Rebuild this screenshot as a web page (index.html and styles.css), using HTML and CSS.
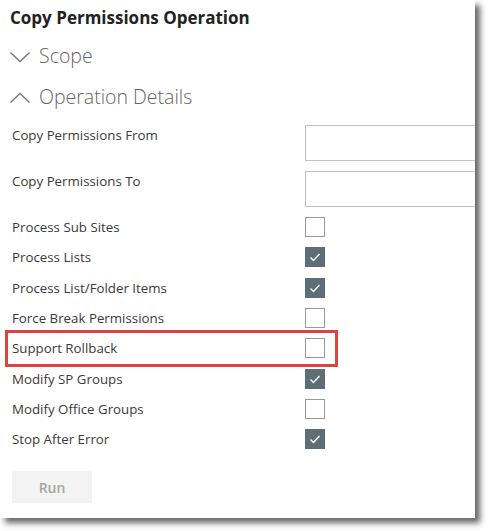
FILE: index.html
```html
<!DOCTYPE html>
<html>
<head>
<meta charset="utf-8">
<link rel="stylesheet" href="styles.css">
</head>
<body>
<div class="panel">
  <div class="title">Copy Permissions Operation</div>
  <div class="section">
    <svg class="chev" width="22" height="12" viewBox="0 0 22 12"><polyline points="1.5,1.5 11,10.5 20.5,1.5" fill="none" stroke="#777" stroke-width="1.3"/></svg>
    <span>Scope</span>
  </div>
  <div class="section open">
    <svg class="chev" width="22" height="12" viewBox="0 0 22 12"><polyline points="1.5,10.5 11,1.5 20.5,10.5" fill="none" stroke="#777" stroke-width="1.3"/></svg>
    <span>Operation Details</span>
  </div>
  <div class="form">
    <div class="row text-row first">
      <label>Copy Permissions From</label>
      <div class="input"></div>
    </div>
    <div class="row text-row">
      <label>Copy Permissions To</label>
      <div class="input"></div>
    </div>
    <div class="row check-row"><label>Process Sub Sites</label><span class="cb"></span></div>
    <div class="row check-row"><label>Process Lists</label><span class="cb checked"><svg width="20" height="20" viewBox="0 0 20 20"><polyline points="5.5,10.5 8.5,13.5 14.5,7" fill="none" stroke="#fff" stroke-width="1.3"/></svg></span></div>
    <div class="row check-row"><label>Process List/Folder Items</label><span class="cb checked"><svg width="20" height="20" viewBox="0 0 20 20"><polyline points="5.5,10.5 8.5,13.5 14.5,7" fill="none" stroke="#fff" stroke-width="1.3"/></svg></span></div>
    <div class="row check-row"><label>Force Break Permissions</label><span class="cb"></span></div>
    <div class="row check-row highlight"><label>Support Rollback</label><span class="cb"></span></div>
    <div class="row check-row"><label>Modify SP Groups</label><span class="cb checked"><svg width="20" height="20" viewBox="0 0 20 20"><polyline points="5.5,10.5 8.5,13.5 14.5,7" fill="none" stroke="#fff" stroke-width="1.3"/></svg></span></div>
    <div class="row check-row"><label>Modify Office Groups</label><span class="cb"></span></div>
    <div class="row check-row"><label>Stop After Error</label><span class="cb checked"><svg width="20" height="20" viewBox="0 0 20 20"><polyline points="5.5,10.5 8.5,13.5 14.5,7" fill="none" stroke="#fff" stroke-width="1.3"/></svg></span></div>
  </div>
  <button class="run">Run</button>
</div>
</body>
</html>
```
FILE: styles.css
```css
html, body {
  margin: 0;
  padding: 0;
  background: #fff;
}
body {
  font-family: "Open Sans", "Noto Sans", sans-serif;
  color: #333;
  height: 531px;
}
.panel {
  width: 475px;
  height: 518px;
  background: #fff;
  box-shadow: 5px 5px 6px rgba(0, 0, 0, 0.6);
  overflow: hidden;
  box-sizing: border-box;
  padding-top: 6px;
}
.title {
  font-size: 17px;
  font-weight: 700;
  color: #222;
  padding-left: 10px;
  height: 30px;
  line-height: 24px;
}
.section {
  display: flex;
  align-items: center;
  gap: 8px;
  padding-left: 9px;
  height: 41px;
  font-size: 19.5px;
  font-weight: 300;
  color: #666;
}
.section .chev {
  flex: none;
}
.section span {
  position: relative;
  top: -1px;
}
.form {
  padding-left: 12px;
  padding-top: 7px;
}
.row {
  display: grid;
  grid-template-columns: 293px 1fr;
  font-size: 13.3px;
  color: #3a3a3a;
}
.text-row {
  height: 41px;
  align-items: start;
}
.text-row.first {
  height: 46px;
}
.text-row label {
  padding-top: 1px;
  line-height: 18px;
}
.input {
  height: 36px;
  border: 1px solid #c2c2c2;
  box-sizing: border-box;
  width: 200px;
}
.check-row {
  height: 30.3px;
  align-items: center;
  position: relative;
}
.check-row label {
  line-height: 18px;
}
.cb {
  width: 20px;
  height: 20px;
  box-sizing: border-box;
  border: 1px solid #999;
  display: block;
  position: relative;
}
.cb.checked {
  background: #5e6e77;
  border-color: #5e6e77;
}
.cb svg {
  position: absolute;
  left: -1px;
  top: -1px;
}
.highlight::after {
  content: "";
  position: absolute;
  left: -7px;
  top: -3px;
  width: 333px;
  height: 37px;
  border: 3px solid #d8473f;
  box-sizing: border-box;
}
.run {
  display: block;
  margin: 17px 0 0 12px;
  width: 80px;
  height: 32px;
  border: none;
  background: #f3f3f3;
  color: #a6a6a6;
  font-family: "Open Sans", "Noto Sans", sans-serif;
  font-size: 14px;
  font-weight: 600;
}
```
